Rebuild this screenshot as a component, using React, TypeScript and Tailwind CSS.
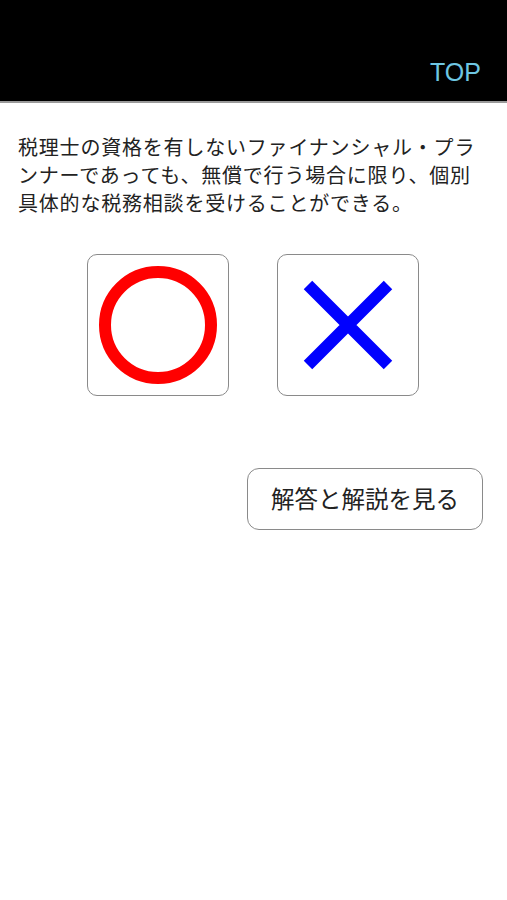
export default function App() {
  const font = { fontFamily: '"Noto Sans CJK JP", "Noto Sans", sans-serif' };

  return (
    <div className="w-[507px] h-[900px] bg-white" style={font}>
      {/* Header */}
      <header className="h-[103px] bg-black border-b-2 border-[#9a9a9a] flex items-end justify-end pr-[26px] pb-[16px]">
        <span className="text-[#6ec6e2] text-[25px] leading-none" style={{ fontFamily: '"Liberation Sans", Arial, sans-serif' }}>
          TOP
        </span>
      </header>

      {/* Question */}
      <p className="mt-[30px] ml-[18px] w-[485px] text-[20px] leading-[28px] tracking-[0.8px] text-[#222]">
        税理士の資格を有しないファイナンシャル・プラ
        <br />
        ンナーであっても、無償で行う場合に限り、個別
        <br />
        具体的な税務相談を受けることができる。
      </p>

      {/* Choices */}
      <div className="mt-[37px] flex justify-center gap-[48px] pr-[1px]">
        <button className="w-[142px] h-[142px] rounded-[10px] border border-[#8a8a8a] bg-white flex items-center justify-center">
          <svg width="120" height="120" viewBox="0 0 120 120">
            <circle cx="60" cy="60" r="53" fill="none" stroke="#ff0000" strokeWidth="12" />
          </svg>
        </button>
        <button className="w-[142px] h-[142px] rounded-[10px] border border-[#8a8a8a] bg-white flex items-center justify-center">
          <svg width="100" height="100" viewBox="0 0 100 100">
            <path d="M10 10 L90 90 M90 10 L10 90" stroke="#0000ff" strokeWidth="12" fill="none" />
          </svg>
        </button>
      </div>

      {/* Answer button */}
      <div className="mt-[72px] flex justify-end pr-[24px]">
        <button className="w-[236px] h-[62px] rounded-[12px] border border-[#8a8a8a] bg-white text-[23.5px] text-[#222]">
          解答と解説を見る
        </button>
      </div>
    </div>
  );
}
